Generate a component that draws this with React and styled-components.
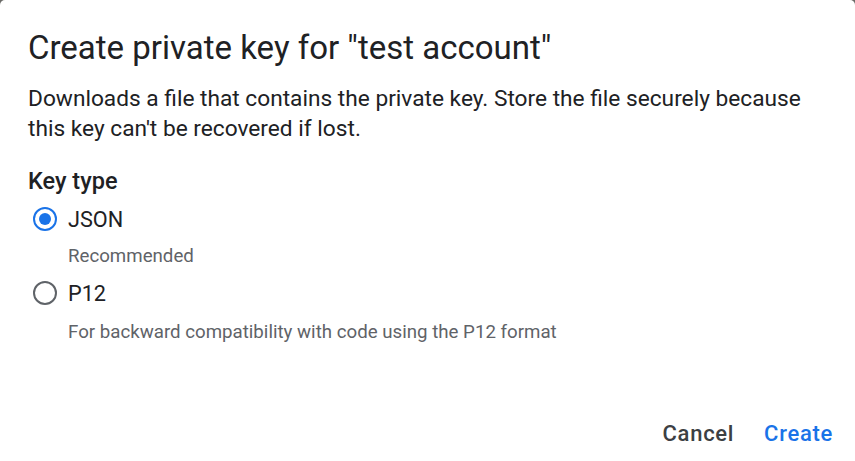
import React, { useState } from 'react';
import styled, { createGlobalStyle } from 'styled-components';

const GlobalStyle = createGlobalStyle`
  html, body {
    margin: 0;
    padding: 0;
    background: #6b6b68;
  }
  body {
    font-family: Roboto, "Liberation Sans", Arial, sans-serif;
    -webkit-font-smoothing: antialiased;
  }
`;

const Dialog = styled.div`
  box-sizing: border-box;
  min-height: 100vh;
  background: #fff;
  border-radius: 5px 5px 0 0;
  display: flex;
  flex-direction: column;
  padding: 28px 0 4px 28px;
`;

const Title = styled.h2`
  margin: 0;
  font-size: 33px;
  line-height: 40px;
  font-weight: 400;
  color: #202124;
`;

const Description = styled.p`
  margin: 16px 0 0;
  font-size: 22.7px;
  line-height: 30px;
  color: #202124;
  max-width: 800px;
`;

const Legend = styled.div`
  margin-top: 22px;
  font-size: 23.5px;
  line-height: 30px;
  font-weight: 500;
  color: #202124;
`;

const Option = styled.label`
  display: flex;
  align-items: center;
  height: 40px;
  margin-top: ${(p) => p.$gap}px;
  cursor: pointer;
`;

const Radio = styled.span`
  box-sizing: border-box;
  width: 24px;
  height: 24px;
  margin-left: 5px;
  margin-right: 11px;
  border-radius: 50%;
  border: 2px solid ${(p) => (p.$checked ? '#1a73e8' : '#5f6368')};
  display: flex;
  align-items: center;
  justify-content: center;

  &::after {
    content: '';
    width: 12px;
    height: 12px;
    border-radius: 50%;
    background: #1a73e8;
    display: ${(p) => (p.$checked ? 'block' : 'none')};
  }
`;

const OptionLabel = styled.span`
  font-size: 21.7px;
  line-height: 24px;
  padding-top: 2px;
  color: #202124;
`;

const Hint = styled.div`
  margin: ${(p) => p.$gap}px 0 0 40px;
  font-size: 18.7px;
  line-height: 24px;
  color: #5f6368;
`;

const Footer = styled.div`
  margin-top: auto;
  display: flex;
  justify-content: flex-end;
  gap: 6px;
  padding-right: 10px;
`;

const Button = styled.button`
  height: 48px;
  padding: 0 12px;
  border: none;
  background: transparent;
  font-family: Roboto, "Liberation Sans", Arial, sans-serif;
  font-size: 22px;
  font-weight: 500;
  letter-spacing: 0.7px;
  color: ${(p) => (p.$primary ? '#1a73e8' : '#3c4043')};
  cursor: pointer;
`;

const options = [
  { id: 'json', label: 'JSON', hint: 'Recommended' },
  { id: 'p12', label: 'P12', hint: 'For backward compatibility with code using the P12 format' },
];

export default function App() {
  const [keyType, setKeyType] = useState('json');

  return (
    <>
      <GlobalStyle />
      <Dialog>
        <Title>Create private key for "test account"</Title>
        <Description>
          Downloads a file that contains the private key. Store the file securely because
          this key can't be recovered if lost.
        </Description>
        <Legend>Key type</Legend>
        {options.map((o, i) => (
          <React.Fragment key={o.id}>
            <Option $gap={i === 0 ? 3 : 5} onClick={() => setKeyType(o.id)}>
              <Radio $checked={keyType === o.id} />
              <OptionLabel>{o.label}</OptionLabel>
            </Option>
            <Hint $gap={i === 0 ? 5 : 7}>{o.hint}</Hint>
          </React.Fragment>
        ))}
        <Footer>
          <Button>Cancel</Button>
          <Button $primary>Create</Button>
        </Footer>
      </Dialog>
    </>
  );
}
